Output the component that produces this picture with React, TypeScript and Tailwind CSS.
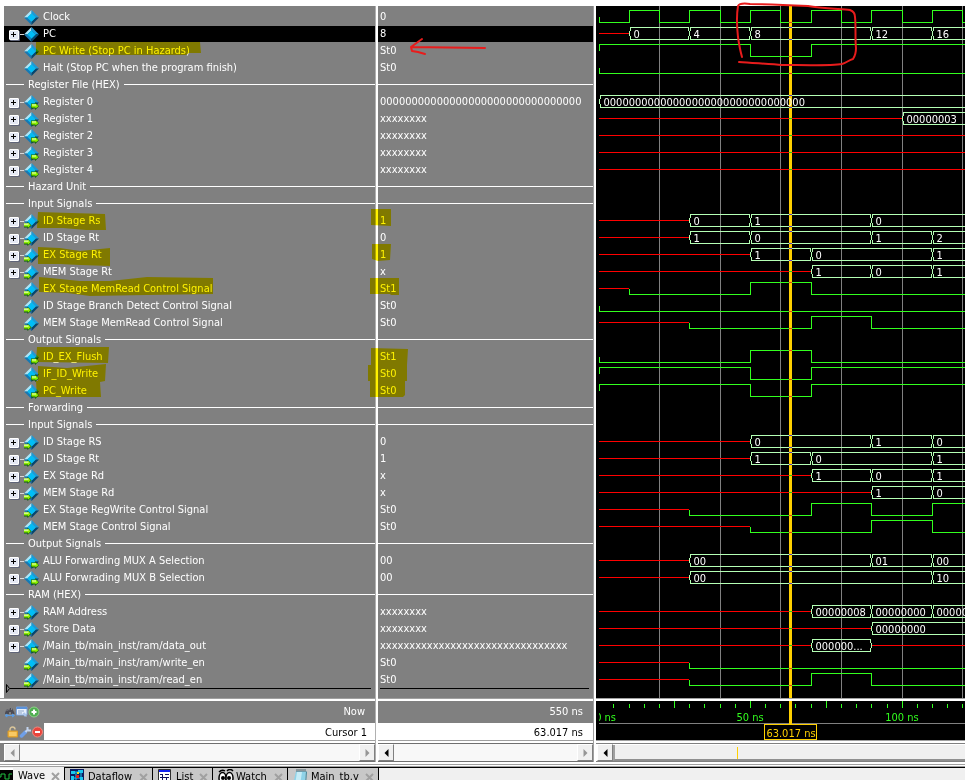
import type { ReactNode } from "react";

type IconKind = "plain" | "in" | "out";
type Bus = { from: number; to: number; label: string };
type Signal = {
  name: string;
  value?: string;
  group?: boolean;
  icon?: IconKind;
  expand?: boolean;
  selected?: boolean;
  unknown?: [number, number][];
  bus?: Bus[];
  bits?: [number, number][];
};

const END = 1000;
const ROW = 17;

function bus(...edges: [number, string][]): Bus[] {
  return edges.map(([from, label], i) => ({ from, label, to: i + 1 < edges.length ? edges[i + 1][0] : END }));
}

const clockBits: [number, number][] = Array.from({ length: 60 }, (_, i) => [i * 10, i % 2]);

const signals: Signal[] = [
  { name: "Clock", value: "0", icon: "plain", bits: clockBits },
  { name: "PC", value: "8", icon: "plain", expand: true, selected: true, unknown: [[0, 10]], bus: bus([10, "0"], [30, "4"], [50, "8"], [90, "12"], [110, "16"]) },
  { name: "PC Write (Stop PC in Hazards)", value: "St0", icon: "plain", bits: [[0, 1], [50, 0], [70, 1]] },
  { name: "Halt (Stop PC when the program finish)", value: "St0", icon: "plain", bits: [[0, 0]] },
  { name: "Register File (HEX)", group: true },
  { name: "Register 0", value: "0".repeat(32), icon: "out", expand: true, bus: bus([0, "0".repeat(32)]) },
  { name: "Register 1", value: "xxxxxxxx", icon: "out", expand: true, unknown: [[0, 100]], bus: bus([100, "00000003"]) },
  { name: "Register 2", value: "xxxxxxxx", icon: "out", expand: true, unknown: [[0, END]] },
  { name: "Register 3", value: "xxxxxxxx", icon: "out", expand: true, unknown: [[0, END]] },
  { name: "Register 4", value: "xxxxxxxx", icon: "out", expand: true, unknown: [[0, END]] },
  { name: "Hazard Unit", group: true },
  { name: "Input Signals", group: true },
  { name: "ID Stage Rs", value: "1", icon: "in", expand: true, unknown: [[0, 30]], bus: bus([30, "0"], [50, "1"], [90, "0"]) },
  { name: "ID Stage Rt", value: "0", icon: "in", expand: true, unknown: [[0, 30]], bus: bus([30, "1"], [50, "0"], [90, "1"], [110, "2"]) },
  { name: "EX Stage Rt", value: "1", icon: "in", expand: true, unknown: [[0, 50]], bus: bus([50, "1"], [70, "0"], [110, "1"]) },
  { name: "MEM Stage Rt", value: "x", icon: "in", expand: true, unknown: [[0, 70]], bus: bus([70, "1"], [90, "0"], [110, "1"]) },
  { name: "EX Stage MemRead Control Signal", value: "St1", icon: "in", unknown: [[0, 10]], bits: [[10, 0], [50, 1], [70, 0]] },
  { name: "ID Stage Branch Detect Control Signal", value: "St0", icon: "in", bits: [[0, 0]] },
  { name: "MEM Stage MemRead Control Signal", value: "St0", icon: "in", unknown: [[0, 30]], bits: [[30, 0], [70, 1], [90, 0]] },
  { name: "Output Signals", group: true },
  { name: "ID_EX_Flush", value: "St1", icon: "out", bits: [[0, 0], [50, 1], [70, 0]] },
  { name: "IF_ID_Write", value: "St0", icon: "out", bits: [[0, 1], [50, 0], [70, 1]] },
  { name: "PC_Write", value: "St0", icon: "out", bits: [[0, 1], [50, 0], [70, 1]] },
  { name: "Forwarding", group: true },
  { name: "Input Signals", group: true },
  { name: "ID Stage RS", value: "0", icon: "in", expand: true, unknown: [[0, 50]], bus: bus([50, "0"], [90, "1"], [110, "0"]) },
  { name: "ID Stage Rt", value: "1", icon: "in", expand: true, unknown: [[0, 50]], bus: bus([50, "1"], [70, "0"], [110, "1"]) },
  { name: "EX Stage Rd", value: "x", icon: "in", expand: true, unknown: [[0, 70]], bus: bus([70, "1"], [90, "0"], [110, "1"]) },
  { name: "MEM Stage Rd", value: "x", icon: "in", expand: true, unknown: [[0, 90]], bus: bus([90, "1"], [110, "0"]) },
  { name: "EX Stage RegWrite Control Signal", value: "St0", icon: "in", unknown: [[0, 30]], bits: [[30, 0], [70, 1], [90, 0], [110, 1]] },
  { name: "MEM Stage Control Signal", value: "St0", icon: "in", unknown: [[0, 50]], bits: [[50, 0], [90, 1], [110, 0]] },
  { name: "Output Signals", group: true },
  { name: "ALU Forwarding MUX A Selection", value: "00", icon: "out", expand: true, unknown: [[0, 30]], bus: bus([30, "00"], [90, "01"], [110, "00"]) },
  { name: "ALU Forwrading MUX B Selection", value: "00", icon: "out", expand: true, unknown: [[0, 30]], bus: bus([30, "00"], [110, "10"]) },
  { name: "RAM (HEX)", group: true },
  { name: "RAM Address", value: "xxxxxxxx", icon: "in", expand: true, unknown: [[0, 70]], bus: bus([70, "00000008"], [90, "00000000"], [110, "00000000"]) },
  { name: "Store Data", value: "xxxxxxxx", icon: "in", expand: true, unknown: [[0, 90]], bus: bus([90, "00000000"]) },
  { name: "/Main_tb/main_inst/ram/data_out", value: "x".repeat(32), icon: "out", expand: true, unknown: [[0, 70], [90, END]], bus: [{ from: 70, to: 90, label: "000000..." }] },
  { name: "/Main_tb/main_inst/ram/write_en", value: "St0", icon: "in", unknown: [[0, 30]], bits: [[30, 0]] },
  { name: "/Main_tb/main_inst/ram/read_en", value: "St0", icon: "in", unknown: [[0, 30]], bits: [[30, 0], [70, 1], [90, 0]] },
];

/* ---------- signal list ---------- */

function SignalIcon({ kind }: { kind: IconKind }) {
  return (
    <svg width="15" height="15" viewBox="0 0 15 15" className="shrink-0" aria-hidden="true">
      <path d="M7.5 0 L0 7.5 L3.5 7.5 L7.5 3.5Z" fill="#a9e6fa" />
      <path d="M7.5 0 L15 7.5 L11.5 7.5 L7.5 3.5Z" fill="#1d9ad6" />
      <path d="M0 7.5 L7.5 15 L7.5 11.5 L3.5 7.5Z" fill="#1579b4" />
      <path d="M15 7.5 L7.5 15 L7.5 11.5 L11.5 7.5Z" fill="#06466f" />
      <path d="M7.5 3.2 L11.8 7.5 L7.5 11.8 L3.2 7.5Z" fill="#00bdf6" />
      {kind === "out" && (
        <>
          <path d="M7 8.5h4V7l4 4.2-4 3.8v-1.500H7z" fill="#0a5a0a" />
          <path d="M7.500 9h4V8.200l3 3-3 2.300v-1H7.500z" fill="#8df000" />
          <path d="M8 9.500h4v1H8z" fill="#f2ffc8" />
        </>
      )}
      {kind === "in" && (
        <>
          <path d="M0 9h3.500V7.500L7.500 11.500 3.500 15v-1.500H0z" fill="#0a5a0a" />
          <path d="M0 9.300h4V8.500l2.800 2.800-2.800 2.400v-1.200H0z" fill="#8df000" />
          <path d="M0 9.500h4.500v1.200H0z" fill="#f2ffc8" />
        </>
      )}
    </svg>
  );
}

function SignalName({ s }: { s: Signal }) {
  if (s.group) {
    return (
      <li className="flex h-[17px] items-center pl-0.5">
        <span className="h-px w-[18px] bg-white" />
        <span className="px-1 leading-4">{s.name}</span>
        <span className="h-px flex-1 bg-white" />
      </li>
    );
  }
  return (
    <li className={"flex h-[17px] items-center border-t border-[#808080] pl-[5px] " + (s.selected ? "bg-black" : "")}>
      {s.expand ? (
        <>
          <button
            aria-label={"Expand " + s.name}
            className="relative mt-0.5 h-2.5 w-2.5 rounded-[1px] border border-white bg-[#e4e8f4] shadow-[1px_1px_0_#5f6478]"
          >
            <span className="absolute left-[1px] top-[3px] h-px w-[5px] bg-black" />
            <span className="absolute left-[3px] top-[1px] h-[5px] w-px bg-black" />
          </button>
          <span className="h-px w-[5px] bg-[#d8d8d8]" />
        </>
      ) : (
        <span className="w-[15px]" />
      )}
      <SignalIcon kind={s.icon ?? "plain"} />
      <span className="pl-1 leading-4 whitespace-nowrap">{s.name}</span>
    </li>
  );
}

function SignalValue({ s }: { s: Signal }) {
  if (s.group) {
    return (
      <li className="flex h-[17px] items-center">
        <span className="h-px flex-1 bg-white" />
      </li>
    );
  }
  return (
    <li className={"flex h-[17px] items-center border-t border-[#808080] pl-0.5 leading-4 " + (s.selected ? "bg-black" : "")}>
      {s.value}
    </li>
  );
}

/* ---------- waveforms ---------- */

const timeX = (t: number) => Math.max(3, Math.floor(2.7 + 3.035 * t));

function Wave({ s, row }: { s: Signal; row: number }) {
  const high = 4 + row * ROW + 0.5;
  const mid = high + 6;
  const low = high + 12;
  let bits = "";
  if (s.bits) {
    bits = `M${timeX(s.bits[0][0]) + 0.5} ${mid}`;
    s.bits.forEach(([t, level]) => {
      bits += `V${level ? high : low}`;
      const next = s.bits!.find(([n]) => n > t);
      bits += `H${timeX(next ? next[0] : END) + 0.5}`;
    });
  }
  return (
    <g fill="none" shapeRendering="crispEdges">
      {s.unknown?.map(([a, b]) => <path key={a} d={`M${timeX(a)} ${mid}H${timeX(b)}`} stroke="#ff0000" />)}
      {bits && <path d={bits} stroke="#32ff1e" />}
      {s.bus?.map((seg) => {
        const a = timeX(seg.from) + 0.5;
        const b = timeX(seg.to) + 0.5;
        return (
          <g key={seg.from}>
            <path
              d={`M${a + 1} ${high}H${b - 1}V${high + 3}L${b} ${high + 4}V${low - 4}L${b - 1} ${low - 3}V${low}H${a + 1}V${low - 3}L${a} ${low - 4}V${high + 4}L${a + 1} ${high + 3}Z`}
              stroke="#b4ffb4"
            />
            <text x={a + 4} y={low - 1.5} fill="#ffffff">
              {seg.label}
            </text>
          </g>
        );
      })}
    </g>
  );
}

function WavePane() {
  return (
    <svg className="block h-[692px] w-full bg-black text-[11px]" role="img" aria-label="Waveforms">
      {Array.from({ length: 20 }, (_, i) => (
        <rect key={i} x={timeX(20 * (i + 1))} y="0" width="1" height="692" fill="#808080" />
      ))}
      <rect x="193" y="0" width="3" height="692" fill="#ffd000" />
      {signals.map((s, i) => (
        <Wave key={i} s={s} row={i} />
      ))}
      {signals.map((s, i) => {
        if (s.group) return null;
        const high = 4 + i * ROW;
        const bit = s.bits?.filter(([t]) => t <= 63).pop();
        const onBus = s.bus?.some((b) => b.from <= 63 && b.to > 63);
        if (bit) return <rect key={i} x="193" y={bit[1] ? high : high + 12} width="3" height="1" fill="#e03c20" />;
        if (onBus)
          return (
            <g key={i} fill="#5a3cc8">
              <rect x="193" y={high} width="3" height="1" />
              <rect x="193" y={high + 12} width="3" height="1" />
            </g>
          );
        return <rect key={i} x="193" y={high + 6} width="3" height="1" fill="#20d020" />;
      })}
    </svg>
  );
}

function TimeLine() {
  return (
    <svg className="block h-[39px] w-full bg-black text-[11px]" role="img" aria-label="Time line">
      {Array.from({ length: 100 }, (_, i) => i + 1).map((i) => (
        <rect key={i} x={timeX(i * 5)} y={i % 5 ? 3 : 0} width="1" height={i % 5 ? 4 : 7} fill="#32ff1e" />
      ))}
      <svg x="3" y="0" width="40" height="22">
        <text x="17" y="20" textAnchor="end" fill="#32ff1e">0 ns</text>
      </svg>
      {[50, 100].map((t) => (
        <text key={t} x={timeX(t)} y="20" textAnchor="middle" fill="#32ff1e">
          {t} ns
        </text>
      ))}
      <rect x="3" y="22" width="100%" height="1" fill="#808080" />
      <rect x="193" y="0" width="3" height="23" fill="#ffd000" />
      <rect x="168.500" y="23.500" width="52" height="15" fill="#000" stroke="#ffd000" />
      <text x="195" y="36" textAnchor="middle" fill="#ffd000">63.017 ns</text>
    </svg>
  );
}

/* ---------- scroll bars ---------- */

function ArrowButton({ dir, dim }: { dir: "left" | "right"; dim?: boolean }) {
  return (
    <button
      aria-label={"Scroll " + dir}
      className="flex h-[17px] w-4 shrink-0 items-center justify-center border border-t-white border-l-white border-r-[#808080] border-b-[#808080] bg-[#f0f0f0]"
    >
      <svg width="5" height="8" viewBox="0 0 5 8" aria-hidden="true">
        <path d={dir === "left" ? "M4.500 0v8L.5 4z" : "M.5 0v8l4-4z"} fill={dim ? "#969696" : "#000"} />
      </svg>
    </button>
  );
}

function ScrollBar({ leftDim }: { leftDim?: boolean }) {
  return (
    <div className="flex h-[19px] items-center border-y border-[#707070] bg-[#f8f8f8]">
      <ArrowButton dir="left" dim={leftDim} />
      <div className="flex-1" />
      <ArrowButton dir="right" dim />
    </div>
  );
}

function PaneEdge() {
  return <div className="h-[3px] border-t border-[#a0a0a0] bg-white" />;
}

/* ---------- tools in the cursor area ---------- */

function Tool({ label, children }: { label: string; children: ReactNode }) {
  return (
    <button aria-label={label} className="h-3 w-3">
      <svg width="12" height="12" viewBox="0 0 12 12" aria-hidden="true">
        {children}
      </svg>
    </button>
  );
}

function TimeTools() {
  return (
    <div className="flex pl-1">
      <Tool label="Find">
        <path d="M1 7l1.500-4H4L5 5l1-3h2l2.500 5v1H7V6H5v2H1z" fill="#4c4c54" />
        <path d="M2.500 4h1M7 3h1" stroke="#b8b8c0" />
        <path d="M1 9.500h9M1 9.500l2-1.500v3zM10.500 9.500l-2-1.500v3z" stroke="#5b9be0" fill="#5b9be0" />
      </Tool>
      <Tool label="Edit grid">
        <path d="M.5 1h10.500v8H.5z" fill="#e8f0fb" stroke="#7ba3da" />
        <path d="M.5 1h10.500v2H.5z" fill="#5b93dc" />
        <path d="M2 5h6M2 7h4" stroke="#8ba4c8" />
        <path d="M6.500 7l2 3.500h2.500L9 6.500z" fill="#a9c4ea" />
      </Tool>
      <Tool label="Add cursor">
        <circle cx="6" cy="6" r="5" fill="#4fae50" stroke="#8fd08a" />
        <path d="M6 3.500v5M3.500 6h5" stroke="#fff" strokeWidth="2" />
      </Tool>
    </div>
  );
}

function CursorTools() {
  return (
    <div className="flex h-full w-11 shrink-0 items-center bg-[#808080] pl-[7px]">
      <Tool label="Lock cursor">
        <path d="M3 5.500V3.500a2.500 2.500 0 0 1 5 0" fill="none" stroke="#d8c49a" strokeWidth="1.500" />
        <path d="M1 5h9.500v6H1z" fill="#f2b43c" stroke="#d89a2a" />
        <path d="M2 7h7.500M2 9h7.500" stroke="#ffdf8c" />
      </Tool>
      <Tool label="Edit cursor">
        <path d="M2.500 10L6.500 6" stroke="#6f9fe8" strokeWidth="3.500" strokeLinecap="round" />
        <path d="M6.500 6L8.500 4M8.500 1v2.500l1 1H12" stroke="#c3d4ee" strokeWidth="2" fill="none" />
      </Tool>
      <Tool label="Remove cursor">
        <circle cx="6.500" cy="6" r="5" fill="#e8453c" stroke="#f08a80" />
        <path d="M4 6h5" stroke="#fff" strokeWidth="2" />
      </Tool>
    </div>
  );
}

/* ---------- tabs ---------- */

const waveIcon = (
  <>
    <path d="M0 0h16v16H0z" fill="#000" />
    <path d="M0 0h16v2H0z" fill="#fff" />
    <path d="M0 9h4V6h4v5h4V6h3" stroke="#20c040" fill="none" />
  </>
);
const dataflowIcon = (
  <>
    <path d="M0 0h14v14H0z" fill="#0c1c60" />
    <path d="M1 2h4v3H1zM8 1h5v3H8zM1 7h3v5H1zM10 8h3v4h-3z" fill="#18c8f0" />
    <path d="M5 3h3M11 4v4M4 9h6M6 3v9" stroke="#18c8f0" fill="none" />
    <path d="M6 6h3v3H6z" fill="#e02020" />
    <path d="M7 3h2v2H7z" fill="#f0e020" />
  </>
);
const listIcon = (
  <>
    <path d="M.5.5h12v14H.5z" fill="#fff" stroke="#303030" />
    <path d="M1 1h11v2H1z" fill="#1020f0" />
    <path d="M2 5.500h3M7 5.500h4M2 8.500h9M4.500 6v6M8.500 8v4" stroke="#101060" fill="none" />
  </>
);
const watchIcon = (
  <>
    <path d="M1 3q3-3 6-1M9 2q3-3 6 0" stroke="#000" strokeWidth="1.500" fill="none" />
    <ellipse cx="4.500" cy="9" rx="3.500" ry="5.500" fill="#fff" stroke="#000" strokeWidth="1.500" />
    <ellipse cx="11.500" cy="9" rx="3.500" ry="5.500" fill="#fff" stroke="#000" strokeWidth="1.500" />
    <circle cx="5" cy="9" r="2" fill="#000" />
    <circle cx="11" cy="9" r="2" fill="#000" />
  </>
);
const sourceIcon = (
  <>
    <path d="M3 2h10l-1 14H0z" fill="#8fd3e8" />
    <path d="M4 3h5l-2 13H2z" fill="#c6ecf6" />
    <path d="M13 2l1 1-1 13h-1z" fill="#4a8a9c" />
    <path d="M4 0v3M6 0v3M8 0v3M10 0v3M12 0v3" stroke="#506870" />
  </>
);

function Tab({ label, icon, className }: { label: string; icon: ReactNode; className: string }) {
  return (
    <div className={"flex h-5 items-start overflow-hidden pt-px " + className}>
      <button className="flex">
        <svg width="16" height="16" viewBox="0 0 16 16" aria-hidden="true">
          {icon}
        </svg>
        <span className="pl-0.5 leading-4">{label}</span>
      </button>
      <span className="flex-1" />
      <button aria-label={"Close " + label} className="mt-1 mr-1">
        <svg width="9" height="9" viewBox="0 0 9 9" aria-hidden="true">
          <path d="M1 1l7 7M8 1L1 8" stroke="#a0a0a0" strokeWidth="2" />
        </svg>
      </button>
    </div>
  );
}

/* ---------- hand-drawn marks over the panes ---------- */

const highlights = [
  "36,42 200,42 201,53 189,53 186,55 36,55",
  "38,212 105,214 106,230 86,230 63,228 37,228",
  "38,247 60,248 80,251 110,248 110,266 80,265 60,264 38,264",
  "39,277 50,278 80,281 110,281 147,277 213,278 213,294 147,295 90,296 67,293 39,292",
  "37,347 109,347 108,363 36,362",
  "38,366 67,368 106,364 105,381 38,381",
  "36,381 105,381 100,382 101,397 37,397",
  "371,209 391,209 391,226 371,225",
  "372,244 391,244 390,260 378,261 372,259",
  "370,278 399,278 399,295 391,295 390,294 370,294",
  "371,348 408,349 407,365 371,365",
  "368,365 407,365 407,381 368,381",
  "370,381 405,381 405,395 403,397 370,397",
];

function Marks() {
  return (
    <>
      <svg className="pointer-events-none absolute inset-0 h-full w-full mix-blend-multiply" aria-hidden="true">
        {highlights.map((p) => (
          <polygon key={p} points={p} fill="#fff200" />
        ))}
      </svg>
      <svg className="pointer-events-none absolute inset-0 h-full w-full" aria-hidden="true">
        <g fill="none" stroke="#e81c1c" strokeWidth="2" strokeLinecap="round" strokeLinejoin="round">
          <path d="M485 48L411 47L422 39M411 47L412 51L418 52L425 54" />
          <path d="M739 62C752 63 770 64 782 65C800 65 830 66 842 64C846 63 849 60 853 59C855 56 856 53 856 48C855 40 856 25 855 17C855 13 853 11 850 10C840 9 820 8 808 6C790 5 765 4 750 4C743 3 739 4 738 6C736 18 737 28 738 37C739 44 740 50 742 57" />
        </g>
      </svg>
    </>
  );
}

export default function App() {
  return (
    <div className="flex h-screen flex-col overflow-hidden bg-white font-['DejaVu_Sans_Condensed','DejaVu_Sans',sans-serif] text-[11px] text-black">
      <main className="relative flex pt-1.5">
        <section className="flex w-[375px] shrink-0 flex-col" aria-label="Signals">
          <div className="ml-1 bg-[#808080] pt-0.5 text-white">
            <ul>
              {signals.map((s, i) => (
                <SignalName key={i} s={s} />
              ))}
            </ul>
            <div className="mr-1 flex h-2.5 items-start pl-0.5">
              <svg width="4" height="9" viewBox="0 0 4 9" className="-mt-1" aria-hidden="true">
                <path d="M.5.5v8l3-4z" fill="none" stroke="#000" />
              </svg>
              <span className="h-px flex-1 bg-black" />
            </div>
          </div>
          <PaneEdge />
          <div className="flex h-[22px] items-center justify-between bg-[#808080] pr-2.5 text-white">
            <TimeTools />
            <span>Now</span>
          </div>
          <div className="flex h-[17px] items-center justify-between bg-white pr-2">
            <CursorTools />
            <span className="pt-0.5 leading-4">Cursor 1</span>
          </div>
          <PaneEdge />
          <div className="bg-[#808080] pl-1">
            <ScrollBar leftDim />
          </div>
        </section>

        <div className="w-[3px] shrink-0 border-l border-[#b0b0b0] bg-white" />

        <section className="flex w-[215px] shrink-0 flex-col" aria-label="Values">
          <div className="bg-[#808080] pt-0.5 text-white">
            <ul>
              {signals.map((s, i) => (
                <SignalValue key={i} s={s} />
              ))}
            </ul>
            <div className="flex h-2.5 items-start pr-1 pl-0.5">
              <span className="h-px flex-1 bg-black" />
            </div>
          </div>
          <PaneEdge />
          <div className="flex h-[22px] items-center justify-end bg-[#808080] pr-2.5 text-white">550 ns</div>
          <div className="flex h-[17px] items-center justify-end bg-white pr-2.5">
            <span className="pt-0.5 leading-4">63.017 ns</span>
          </div>
          <PaneEdge />
          <ScrollBar />
        </section>

        <div className="w-[3px] shrink-0 border-l border-[#a0a0a0] bg-white" />

        <section className="flex min-w-0 flex-1 flex-col" aria-label="Waves">
          <WavePane />
          <PaneEdge />
          <TimeLine />
          <PaneEdge />
          <div className="flex h-[19px] items-center border-y border-[#808080] bg-white pl-px">
            <ArrowButton dir="left" />
            <div className="h-4 flex-1 border-b-2 border-l-2 border-b-[#909090] border-l-[#a0a0a0] bg-[#f0f0f0] pl-[122px]">
              <div className="mt-0.5 h-3 w-px bg-[#ffd000]" />
            </div>
          </div>
        </section>

        <Marks />
      </main>

      <div className="mt-0.5 h-[3px] shrink-0 border-y border-[#a0a0a0] bg-white" />

      <nav className="flex shrink-0 bg-[#f0f0f0]" aria-label="Windows">
        <Tab label="Wave" icon={<g transform="translate(-3 0)">{waveIcon}</g>} className="w-16 bg-[#f0f0f0]" />
        <Tab label="Dataflow" icon={dataflowIcon} className="w-[88px] border-t border-l border-black bg-[#c8c8c8] pl-[5px]" />
        <Tab label="List" icon={listIcon} className="w-[60px] border-t border-l border-black bg-[#c8c8c8] pl-[5px]" />
        <Tab label="Watch" icon={watchIcon} className="w-[75px] border-t border-l border-black bg-[#c8c8c8] pl-[5px]" />
        <Tab label="Main_tb.v" icon={sourceIcon} className="w-[92px] border-x border-t border-black bg-[#c8c8c8] pl-[5px]" />
        <div className="flex-1 border-t border-black" />
      </nav>
    </div>
  );
}
